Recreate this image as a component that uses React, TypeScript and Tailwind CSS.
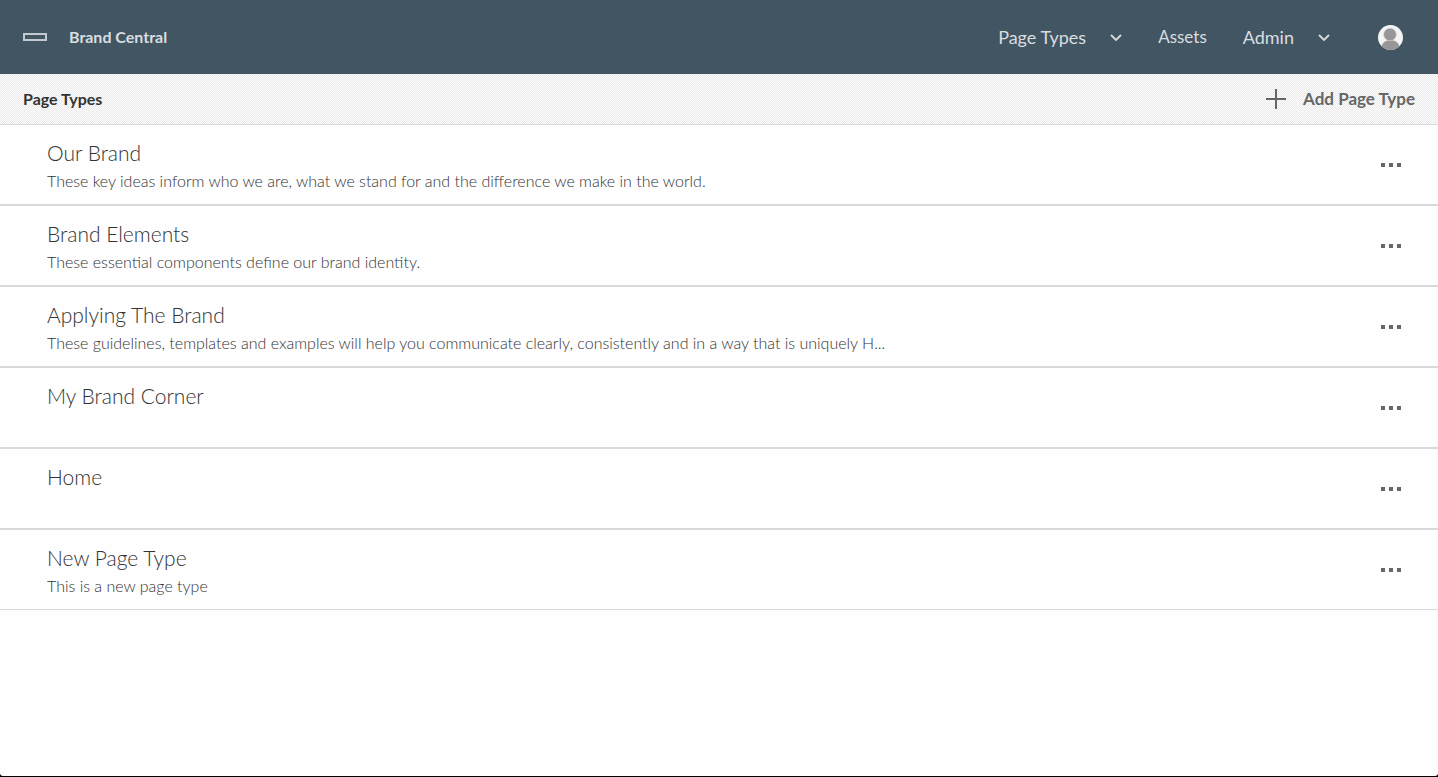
type PageType = { name: string; description?: string };

const pageTypes: PageType[] = [
  { name: 'Our Brand', description: 'These key ideas inform who we are, what we stand for and the difference we make in the world.' },
  { name: 'Brand Elements', description: 'These essential components define our brand identity.' },
  { name: 'Applying The Brand', description: 'These guidelines, templates and examples will help you communicate clearly, consistently and in a way that is uniquely H...' },
  { name: 'My Brand Corner' },
  { name: 'Home' },
  { name: 'New Page Type', description: 'This is a new page type' },
];

function Chevron() {
  return (
    <svg aria-hidden="true" className="h-3 w-3" viewBox="0 0 12 12" fill="none" stroke="currentColor" strokeWidth="1.8">
      <path d="M1 4 6 9 11 4" />
    </svg>
  );
}

function Header() {
  return (
    <header className="flex h-[74px] items-center justify-between bg-[#425563] pl-[23px] pr-[35px] text-[#d9dde0]">
      <a href="#home" className="flex items-center gap-[22px] text-base font-bold">
        <svg aria-hidden="true" className="h-2 w-6" viewBox="0 0 24 8" fill="none" stroke="#c3c9d0" strokeWidth="2">
          <rect x="1" y="1" width="22" height="6" />
        </svg>
        Brand Central
      </a>
      <nav className="flex items-center text-lg">
        <button type="button" className="flex items-center gap-6">
          Page Types
          <Chevron />
        </button>
        <a href="#assets" className="ml-9 text-[17px]">Assets</a>
        <button type="button" className="ml-9 flex items-center gap-6">
          Admin
          <Chevron />
        </button>
        <button type="button" aria-label="Account" className="ml-12">
          <svg aria-hidden="true" className="h-[25px] w-[25px]" viewBox="0 0 25 25">
            <clipPath id="avatar">
              <circle cx="12.5" cy="12.5" r="12.5" />
            </clipPath>
            <g clipPath="url(#avatar)">
              <rect width="25" height="25" fill="#f4f4f4" />
              <path d="M3 25C3 18.5 7 15 12.5 15S22 18.5 22 25Z" fill="#979797" />
              <circle cx="12" cy="9.5" r="6.3" fill="#979797" stroke="#d2d2d2" strokeWidth="0.7" />
            </g>
          </svg>
        </button>
      </nav>
    </header>
  );
}

function PageTypeRow({ name, description }: PageType) {
  return (
    <li className="flex h-[81px] items-center justify-between border-y border-[#d9d9d9] pl-[47px] pr-[37px]">
      <div className="h-full min-w-0 pt-[14px] font-light text-[#333333]">
        <h2 className="truncate text-[21px] leading-7">{name}</h2>
        {description && <p className="truncate text-base leading-7">{description}</p>}
      </div>
      <button type="button" aria-label={`Actions for ${name}`}>
        <svg aria-hidden="true" className="h-1 w-5" viewBox="0 0 20 4" fill="#666666">
          <rect width="4" height="4" />
          <rect x="8" width="4" height="4" />
          <rect x="16" width="4" height="4" />
        </svg>
      </button>
    </li>
  );
}

export default function App() {
  return (
    <div className="flex min-h-screen flex-col bg-black pb-px font-['Lato','Liberation_Sans',sans-serif]">
      <div className="flex-1 overflow-hidden rounded-b-[3px] bg-[#fefefe]">
        <Header />
        <main>
          <div className="flex h-[50px] items-center justify-between bg-[#fefefe] bg-[conic-gradient(#e9e9e9_25%,transparent_0_50%,#e9e9e9_0_75%,transparent_0)] bg-[length:2px_2px] px-[23px]">
            <h1 className="text-base font-bold text-[#333333]">Page Types</h1>
            <button type="button" className="flex items-center gap-[17px] text-[17px] font-bold text-[#666666]">
              <svg aria-hidden="true" className="h-5 w-5" viewBox="0 0 20 20" fill="none" stroke="currentColor" strokeWidth="2">
                <path d="M10 0V20M0 10H20" />
              </svg>
              Add Page Type
            </button>
          </div>
          <ul>
            {pageTypes.map((pageType) => (
              <PageTypeRow key={pageType.name} {...pageType} />
            ))}
          </ul>
        </main>
      </div>
    </div>
  );
}
